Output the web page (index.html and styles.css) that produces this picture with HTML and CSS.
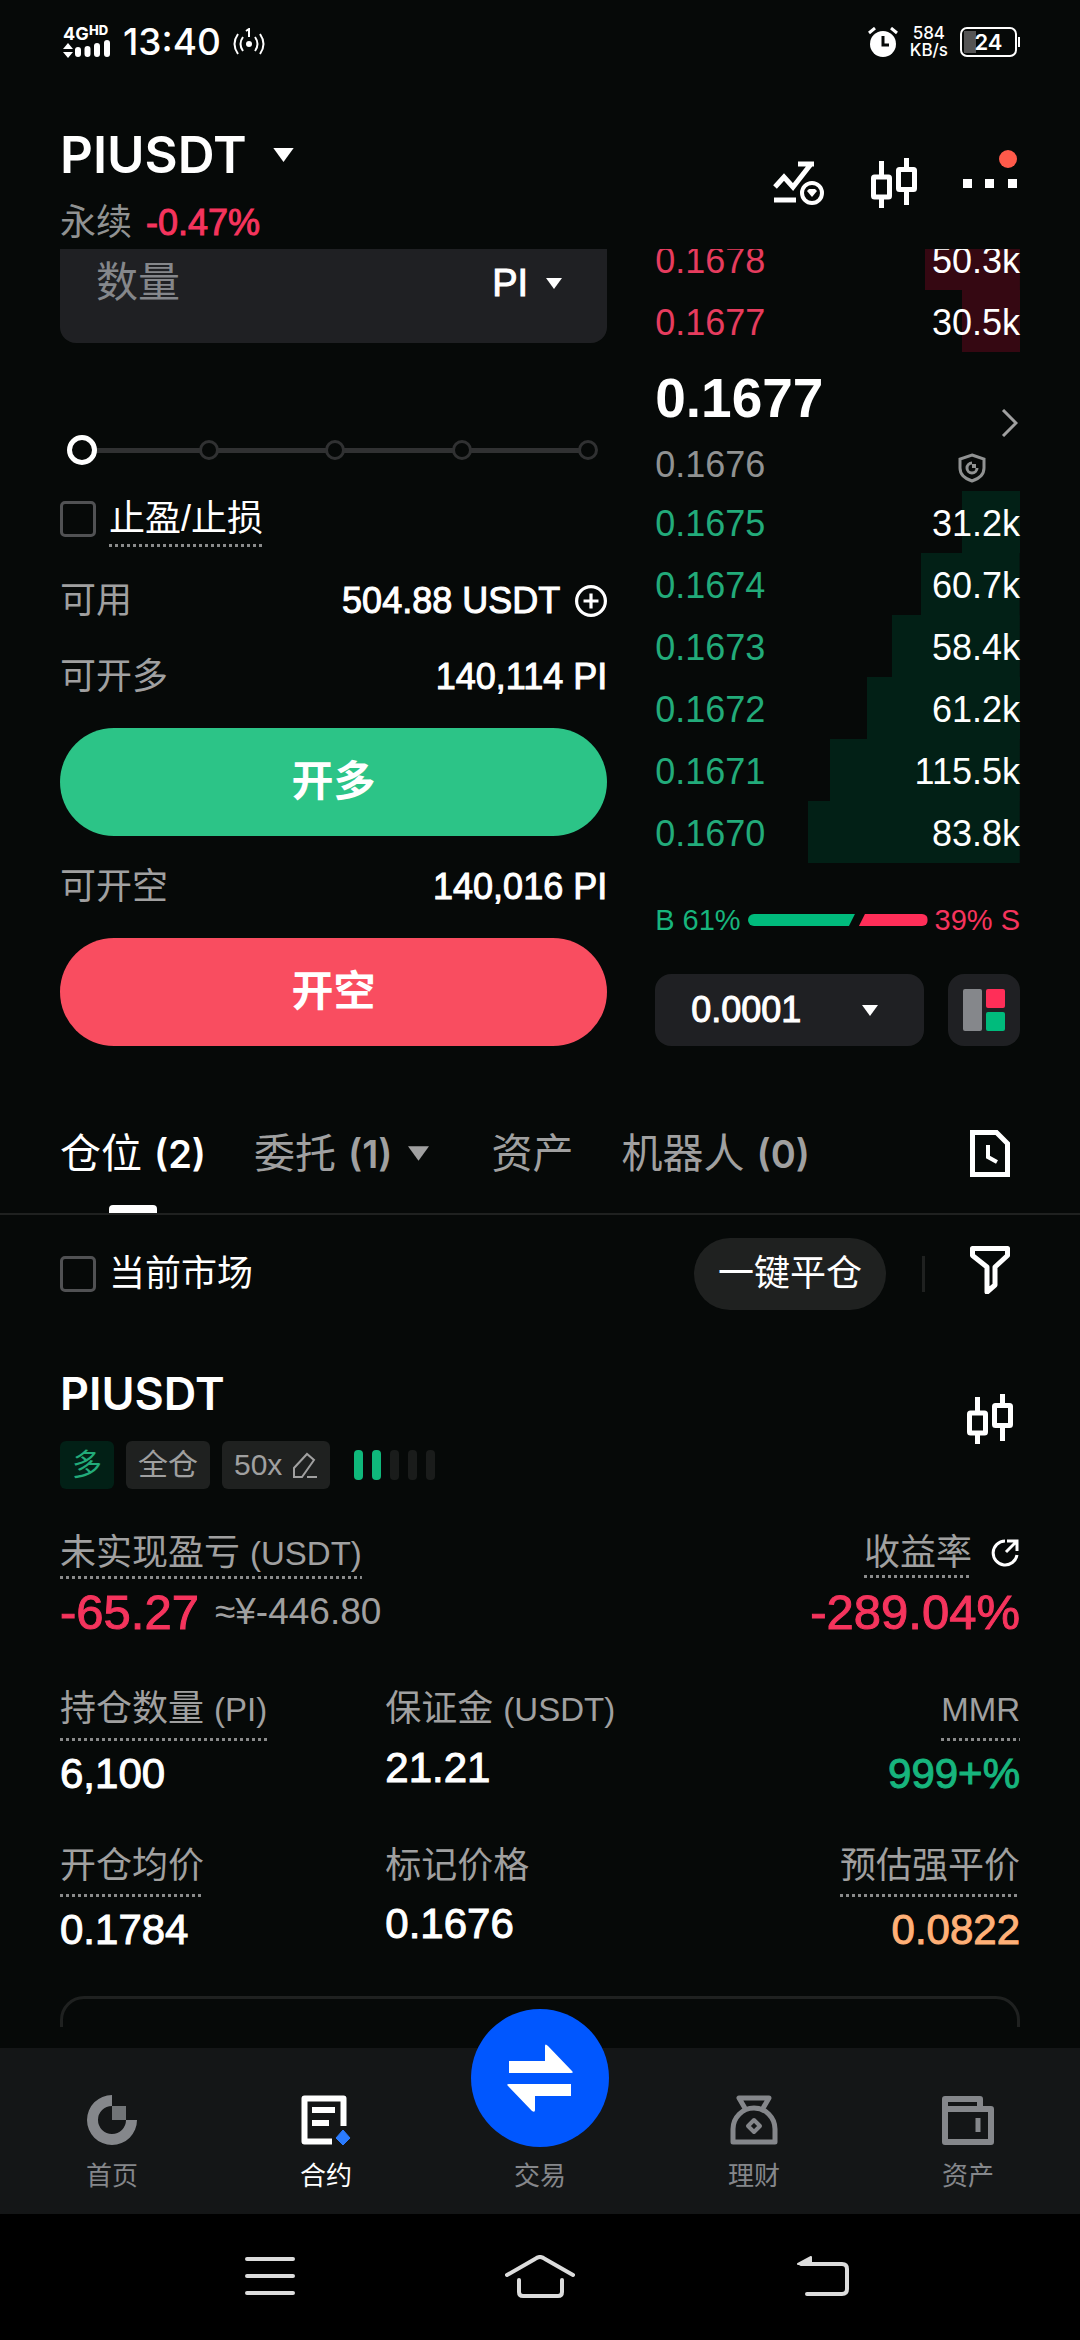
FILE: index.html
```html
<!DOCTYPE html>
<html lang="zh-CN">
<head>
  <meta charset="UTF-8" />
  <meta name="viewport" content="width=device-width, initial-scale=1.0"/>
  <title>PIUSDT 永续</title>
  <link rel="stylesheet" href="styles.css">
</head>
<body>
  <!-- shared icons -->
  <svg class="sprite" aria-hidden="true">
    <symbol id="candles" viewBox="0 0 46 50">
      <path d="M10.500 3v15M10.500 40v10M35.500 0v12M35.500 32v15" fill="none" stroke="currentColor" stroke-width="5"/>
      <rect x="2.500" y="19" width="16" height="20" rx="1" fill="none" stroke="currentColor" stroke-width="5"/>
      <rect x="27.500" y="11.500" width="16" height="20" rx="1" fill="none" stroke="currentColor" stroke-width="5"/>
    </symbol>
    <symbol id="caret" viewBox="0 0 16 11">
      <path d="M0 0h16L8 11z" fill="currentColor"/>
    </symbol>
  </svg>

  <div class="status-bar">
    <div class="status-side">
      <svg class="signal" viewBox="0 0 48 34">
        <text x="0" y="15" font-size="18" font-weight="700" fill="#fff">4G</text>
        <text x="26" y="10" font-size="13" font-weight="800" fill="#fff">HD</text>
        <path d="M0 24l5-6 5 6zM0 27h10l-5 6z" fill="#fff"/>
        <path d="M15 25v4M24.500 24v5M34 21v8M44 18v11" stroke="#fff" stroke-width="6" stroke-linecap="round"/>
      </svg>
      <span class="clock">13:40</span>
      <svg class="hotspot" viewBox="0 0 32 28">
        <circle cx="16" cy="16" r="3" fill="#fff"/>
        <path d="M16 9V1l-3 2M5 6q-7 10 0 20M10 9q-5 7 0 14M27 6q7 10 0 20M22 9q5 7 0 14" fill="none" stroke="#fff" stroke-width="2"/>
      </svg>
    </div>
    <div class="status-side">
      <svg class="alarm" viewBox="0 0 30 30">
        <circle cx="15" cy="17" r="13" fill="#fff"/>
        <path d="M1 6l6-5M29 6l-6-5" stroke="#fff" stroke-width="3"/>
        <path d="M15 9v9h6" fill="none" stroke="#060908" stroke-width="3"/>
      </svg>
      <div class="speed"><span>584</span><span>KB/s</span></div>
      <div class="battery">24</div>
    </div>
  </div>

  <header class="header">
    <div>
      <h1 class="pair">PIUSDT <svg class="pair-caret"><use href="#caret"/></svg></h1>
      <p class="pair-info">永续 <span class="down medium">-0.47%</span></p>
    </div>
    <div class="header-icons">
      <button class="icon-btn" aria-label="交易设置">
        <svg width="52" height="44" viewBox="0 0 52 44">
          <path d="M2 26l9-10 9 10L38 3M25 3h16" fill="none" stroke="currentColor" stroke-width="5"/>
          <path d="M1 39h22" stroke="currentColor" stroke-width="5"/>
          <circle cx="39" cy="32" r="10" fill="none" stroke="currentColor" stroke-width="4"/>
          <path d="M34 30l2-2h6l2 2-5 6z" fill="currentColor"/>
        </svg>
      </button>
      <button class="icon-btn" aria-label="K线"><svg width="46" height="50"><use href="#candles"/></svg></button>
      <button class="icon-btn more" aria-label="更多">
        <svg width="54" height="9" viewBox="0 0 54 9"><path d="M0 0h9v9H0zM22 0h9v9h-9zM45 0h9v9h-9z" fill="currentColor"/></svg>
      </button>
    </div>
  </header>

  <main class="content">
    <section class="trade">
      <form class="order-form">
        <div class="amount-box">
          <input class="amount" type="text" placeholder="数量" aria-label="数量">
          <div class="unit medium">
            <select aria-label="单位"><option>PI</option></select>
            <svg class="caret"><use href="#caret"/></svg>
          </div>
        </div>

        <div class="slider">
          <div class="slider-marks"><i></i><i></i><i></i><i></i><i></i></div>
          <input type="range" min="0" max="100" value="0" aria-label="仓位比例">
        </div>

        <div class="check tpsl">
          <input type="checkbox" id="tpsl">
          <label for="tpsl" class="hint">止盈/止损</label>
        </div>

        <div class="row">
          <span>可用</span>
          <strong class="medium">504.88 USDT
            <svg class="plus" viewBox="0 0 30 30"><circle cx="15" cy="15" r="13.500"/><path d="M15 8v14M8 15h14"/></svg>
          </strong>
        </div>
        <div class="row"><span>可开多</span><strong class="medium">140,114 PI</strong></div>
        <button type="button" class="order-btn long">开多</button>
        <div class="row"><span>可开空</span><strong class="medium">140,016 PI</strong></div>
        <button type="button" class="order-btn short">开空</button>
      </form>

      <div class="book">
        <table class="depth asks">
          <tr style="--depth: 26%"><td>0.1678</td><td>50.3k</td></tr>
          <tr style="--depth: 16%"><td>0.1677</td><td>30.5k</td></tr>
        </table>
        <div class="last">
          <div>
            <div class="last-price">0.1677</div>
            <div class="mark-price">0.1676</div>
          </div>
          <div class="last-icons">
            <svg width="17" height="28" viewBox="0 0 17 28"><path d="M2 1l13 13L2 27" fill="none" stroke="#a0a0a0" stroke-width="3"/></svg>
            <svg class="shield" width="28" height="30" viewBox="0 0 28 30">
              <path d="M14 2l12 4v9q0 9-12 13Q2 24 2 15V6z" fill="none" stroke="#909292" stroke-width="3"/>
              <path d="M14 10a5 5 0 1 0 5 5" fill="none" stroke="#909292" stroke-width="3"/>
              <path d="M14 11h4v4h-4z" fill="#909292"/>
            </svg>
          </div>
        </div>
        <table class="depth bids">
          <tr style="--depth: 16%"><td>0.1675</td><td>31.2k</td></tr>
          <tr style="--depth: 27%"><td>0.1674</td><td>60.7k</td></tr>
          <tr style="--depth: 35%"><td>0.1673</td><td>58.4k</td></tr>
          <tr style="--depth: 42%"><td>0.1672</td><td>61.2k</td></tr>
          <tr style="--depth: 52%"><td>0.1671</td><td>115.5k</td></tr>
          <tr style="--depth: 58%"><td>0.1670</td><td>83.8k</td></tr>
        </table>
        <div class="ratio">
          <span class="up">B 61%</span>
          <div class="ratio-bar"><i class="buy" style="flex-grow: 61"></i><i class="sell" style="flex-grow: 39"></i></div>
          <span class="down">39% S</span>
        </div>
        <div class="book-tools">
          <div class="precision medium">
            <select aria-label="深度精度"><option>0.0001</option></select>
            <svg class="caret"><use href="#caret"/></svg>
          </div>
          <button class="layout-btn" aria-label="盘口样式">
            <svg width="42" height="42" viewBox="0 0 42 42">
              <rect width="19" height="42" rx="2" fill="#85878b"/>
              <rect x="23" width="19" height="19" rx="2" fill="#ff2e58"/>
              <rect x="23" y="23" width="19" height="19" rx="2" fill="#00bb7c"/>
            </svg>
          </button>
        </div>
      </div>
    </section>

    <nav class="tabs">
      <button class="tab active">仓位 <b>(2)</b></button>
      <button class="tab">委托 <b>(1)</b> <svg class="tab-caret"><use href="#caret"/></svg></button>
      <button class="tab">资产</button>
      <button class="tab">机器人 <b>(0)</b></button>
      <button class="icon-btn history" aria-label="历史">
        <svg width="40" height="48" viewBox="0 0 40 48">
          <path d="M2.500 2.500h24l11 11v31h-35z" fill="none" stroke="currentColor" stroke-width="5"/>
          <path d="M18 15v12l9 5" fill="none" stroke="currentColor" stroke-width="4"/>
        </svg>
      </button>
    </nav>

    <div class="filters">
      <div class="check">
        <input type="checkbox" id="current-market">
        <label for="current-market">当前市场</label>
      </div>
      <button class="close-all">一键平仓</button>
      <span class="divider"></span>
      <button class="icon-btn funnel" aria-label="筛选">
        <svg width="40" height="48" viewBox="0 0 40 48">
          <path d="M2.500 2.500h35v7L25 21v18l-8 7V21L2.500 9.500z" fill="none" stroke="currentColor" stroke-width="5" stroke-linejoin="round"/>
        </svg>
      </button>
    </div>

    <article class="position">
      <div class="position-head">
        <div>
          <h2>PIUSDT</h2>
          <div class="tags">
            <span class="tag tag-long">多</span>
            <span class="tag">全仓</span>
            <span class="tag">50x
              <svg width="26" height="28" viewBox="0 0 26 28"><path d="M2 26v-9L15 3l7 6L10 26zM15 26h10" fill="none" stroke="currentColor" stroke-width="2"/></svg>
            </span>
            <span class="adl"><i class="on"></i><i class="on"></i><i></i><i></i><i></i></span>
          </div>
        </div>
        <button class="icon-btn" aria-label="K线"><svg width="46" height="50"><use href="#candles"/></svg></button>
      </div>

      <div class="pnl">
        <div>
          <div class="label"><span class="hint">未实现盈亏 <span class="latin">(USDT)</span></span></div>
          <div class="pnl-value"><span class="down medium">-65.27</span><small>≈¥-446.80</small></div>
        </div>
        <div class="right">
          <div class="label"><span class="hint">收益率</span>
            <svg class="share" width="30" height="30" viewBox="0 0 30 30">
              <path d="M15 3a12 12 0 1 0 12 14M16 14L27 3M17 3h10v10" fill="none" stroke="#fff" stroke-width="3"/>
            </svg>
          </div>
          <div class="pnl-value down medium">-289.04%</div>
        </div>
      </div>

      <dl class="stats">
        <div><dt><span class="hint low">持仓数量 <span class="latin">(PI)</span></span></dt><dd>6,100</dd></div>
        <div><dt>保证金 <span class="latin">(USDT)</span></dt><dd>21.21</dd></div>
        <div class="right"><dt><span class="hint low"><span class="latin">MMR</span></span></dt><dd class="up">999+%</dd></div>
        <div><dt><span class="hint low">开仓均价</span></dt><dd>0.1784</dd></div>
        <div><dt>标记价格</dt><dd>0.1676</dd></div>
        <div class="right"><dt><span class="hint low">预估强平价</span></dt><dd class="warn">0.0822</dd></div>
      </dl>

      <div class="next-box"></div>
    </article>
  </main>

  <nav class="bottom-nav">
    <a href="#home">
      <svg width="50" height="50" viewBox="0 0 50 50"><path d="M25 0a25 25 0 1 0 25 25H39a14 14 0 1 1-14-14z" fill="currentColor"/><path d="M25 11h14v14H25z" fill="#717477"/></svg>
      首页
    </a>
    <a href="#futures" class="active">
      <svg width="50" height="50" viewBox="0 0 50 50">
        <path d="M42.500 31V3.500h-39v43H31" fill="none" stroke="currentColor" stroke-width="6" stroke-linejoin="round"/>
        <path d="M11 15h23M11 28h17" stroke="currentColor" stroke-width="6"/>
        <path d="M42 35l7 8-7 7-7-7z" fill="#2b7cff" stroke="#2b7cff" stroke-linejoin="round"/>
      </svg>
      合约
    </a>
    <a href="#trade">
      <span class="swap">
        <svg width="66" height="68" viewBox="0 0 66 68"><path d="M2 17h36V2q0-3 3 0l24 25q2 2-1 2H2zM64 40H2q-3 0-1 2l24 25q3 2 3-1V52h36z" fill="#fff"/></svg>
      </span>
      交易
    </a>
    <a href="#earn">
      <svg width="50" height="50" viewBox="0 0 50 50">
        <path d="M17 15L10 3h30l-7 12M4 47V34a21 21 0 0 1 42 0v13z" fill="none" stroke="currentColor" stroke-width="5" stroke-linejoin="round"/>
        <path d="M25 25l6 6-6 6-6-6z" fill="none" stroke="currentColor" stroke-width="4" stroke-linejoin="round"/>
      </svg>
      理财
    </a>
    <a href="#assets">
      <svg width="52" height="50" viewBox="0 0 52 50">
        <path d="M3 14V4h35v10M3 14h46v33H3z" fill="none" stroke="currentColor" stroke-width="6" stroke-linejoin="round"/>
        <path d="M36 23v14" stroke="currentColor" stroke-width="5"/>
      </svg>
      资产
    </a>
  </nav>

  <div class="system-nav">
    <button class="icon-btn" aria-label="菜单"><svg width="50" height="44" viewBox="0 0 50 44"><path d="M2 4h46M2 21h46M2 38h46"/></svg></button>
    <button class="icon-btn" aria-label="主页"><svg width="70" height="44" viewBox="0 0 70 44"><path d="M2 20L30 4q5-4 10 0l28 16M14 25v12q0 4 4 4h35q4 0 4-4V25"/></svg></button>
    <button class="icon-btn back" aria-label="返回"><svg width="52" height="44" viewBox="0 0 52 44"><path d="M4 9h41q5 0 5 5v20q0 5-5 5H10"/><path d="M1 9L14 2v7z"/></svg></button>
  </div>
</body>
</html>
```

FILE: styles.css
```css
* {
  margin: 0;
  padding: 0;
  box-sizing: border-box;
}

body {
  display: flex;
  flex-direction: column;
  height: 100vh;
  background: #060908;
  color: #fff;
  font-family: "Liberation Sans", "Noto Sans CJK SC", sans-serif;
  font-size: 36px;
  line-height: 50px;
  overflow: hidden;
}

button, input, select {
  font: inherit;
  color: inherit;
  background: none;
  border: none;
  appearance: none;
  outline: none;
}

button { cursor: pointer; }
svg { display: block; flex: none; }
.sprite { position: absolute; width: 0; height: 0; }
.icon-btn { display: flex; }

.up { color: #17b57d; }
.down { color: #f5345d; }
.warn { color: #ffb077; }

/* a weight between regular and bold */
.medium,
.stats dd {
  font-weight: 400;
  -webkit-text-stroke: 1px currentColor;
}

/* status bar */
.status-bar {
  display: flex;
  justify-content: space-between;
  padding: 0 60px;
  height: 84px;
  font-family: Inter, sans-serif;
}

.status-side {
  display: flex;
  align-items: center;
  gap: 12px;
}

.signal { width: 48px; height: 34px; margin-left: 3px; overflow: visible; }
.clock { font-size: 37px; font-weight: 500; }
.hotspot { width: 32px; height: 28px; }
.alarm { width: 30px; height: 30px; }

.speed {
  display: flex;
  flex-direction: column;
  font-size: 17px;
  font-weight: 500;
  line-height: 17px;
  text-align: center;
}

.battery {
  position: relative;
  width: 57px;
  height: 30px;
  margin-right: 3px;
  border: 2px solid #fff;
  border-radius: 7px;
  background: linear-gradient(#555, #555) 2px 2px / 12px 22px no-repeat;
  font-size: 22px;
  font-weight: 600;
  line-height: 26px;
  text-align: center;
}

.battery::after {
  content: "";
  position: absolute;
  right: -5px;
  top: 8px;
  width: 2px;
  height: 10px;
  background: #fff;
}

/* header */
.header {
  display: flex;
  justify-content: space-between;
  padding: 36px 60px 0;
  height: 165px;
}

.pair {
  display: flex;
  align-items: center;
  gap: 26px;
  font-family: Inter, sans-serif;
  font-size: 51px;
  font-weight: 600;
  line-height: 70px;
}

.pair-caret { width: 21px; height: 14px; }

.pair-info {
  display: flex;
  gap: 14px;
  color: #909292;
  line-height: 66px;
}

.header-icons {
  display: flex;
  align-items: center;
  gap: 46px;
  height: 126px;
  padding-right: 3px;
}

.more { position: relative; }

.more::after {
  content: "";
  position: absolute;
  right: 0;
  bottom: 20px;
  width: 18px;
  height: 18px;
  border-radius: 50%;
  background: #ff5a4a;
}

/* scrolled content */
.content {
  flex: 1;
  min-height: 0;
  margin-bottom: 21px;
  overflow: hidden;
}

.trade {
  display: flex;
  gap: 48px;
  padding: 0 60px;
}

.order-form {
  flex: 3;
  min-width: 0;
  display: flex;
  flex-direction: column;
  gap: 26px;
  margin-top: -26px;
}

.book {
  flex: 2;
  min-width: 0;
  margin-top: -21px;
}

.amount-box {
  display: flex;
  align-items: center;
  height: 120px;
  padding: 0 45px 0 36px;
  border-radius: 16px;
  background: #1f2023;
}

.amount { flex: 1; min-width: 0; font-size: 42px; }
.amount::placeholder { color: #85878b; }

.unit {
  display: flex;
  align-items: center;
  gap: 18px;
  font-size: 38px;
}

.caret { width: 16px; height: 11px; }

.slider {
  position: relative;
  height: 30px;
  margin: 66px 7px 0;
}

.slider-marks {
  display: flex;
  justify-content: space-between;
  align-items: center;
  height: 30px;
  padding: 0 2px 0 5px;
  background: linear-gradient(#303132, #303132) center / calc(100% - 24px) 5px no-repeat;
}

.slider-marks i {
  width: 20px;
  height: 20px;
  border: 3px solid #303132;
  border-radius: 50%;
  background: #060908;
}

.slider input {
  position: absolute;
  inset: 0;
  width: 100%;
}

.slider input::-webkit-slider-thumb {
  appearance: none;
  width: 30px;
  height: 30px;
  border: 5px solid #fff;
  border-radius: 50%;
  background: #060908;
}

.check {
  display: flex;
  align-items: center;
  gap: 13px;
}

.check input {
  width: 36px;
  height: 36px;
  border: 3px solid #505153;
  border-radius: 5px;
}

.tpsl { margin-bottom: 3px; }
.tpsl label { line-height: 56px; }

.hint {
  background: repeating-linear-gradient(90deg, #8a8b8b 0 3px, transparent 3px 6px) bottom / 100% 3px no-repeat;
}

.latin { font-size: 33px; }

.row {
  display: flex;
  justify-content: space-between;
  color: #a0a0a0;
}

.row strong {
  display: flex;
  align-items: center;
  gap: 15px;
  color: #fff;
}

.plus {
  width: 32px;
  height: 32px;
  fill: none;
  stroke: #fff;
  stroke-width: 3;
}

.order-btn {
  height: 108px;
  border-radius: 54px;
  font-size: 42px;
  font-weight: 700;
}

.long { background: #2cc487; }
.short { background: #f94d60; }

/* order book */
.depth,
.depth tbody { display: block; }

.depth tr {
  display: flex;
  justify-content: space-between;
  height: 62px;
  line-height: 66px;
  background: linear-gradient(var(--fill), var(--fill)) right / var(--depth) 100% no-repeat;
}

.asks { --fill: #350812; }
.bids { --fill: #022016; }
.asks td:first-child { color: #e63c5e; }
.bids td:first-child { color: #22ab7a; }

.last {
  display: flex;
  justify-content: space-between;
  height: 139px;
}

.last-price {
  padding-top: 10px;
  font-size: 55px;
  font-weight: 700;
  line-height: 72px;
}

.mark-price { color: #909292; line-height: 62px; }

.last-icons {
  display: flex;
  flex-direction: column;
  align-items: flex-end;
  gap: 16px;
  padding: 57px 2px 0 0;
}

.shield { margin-right: 32px; }

.ratio {
  display: flex;
  align-items: center;
  gap: 7px;
  height: 36px;
  margin: 39px 0 36px;
  font-size: 29px;
}

.ratio-bar {
  flex: 1;
  display: flex;
  gap: 4px;
  height: 12px;
}

.ratio-bar i { flex-basis: 0; }

.buy {
  background: #00bb7c;
  border-radius: 6px 0 0 6px;
  clip-path: polygon(0 0, 100% 0, calc(100% - 6px) 100%, 0 100%);
}

.sell {
  background: #ff2e58;
  border-radius: 0 6px 6px 0;
  clip-path: polygon(6px 0, 100% 0, 100% 100%, 0 100%);
}

.book-tools {
  display: flex;
  gap: 24px;
}

.precision {
  flex: 1;
  display: flex;
  align-items: center;
  justify-content: space-between;
  height: 72px;
  padding: 0 46px 0 36px;
  border-radius: 16px;
  background: #1f2023;
}

.layout-btn {
  display: flex;
  align-items: center;
  justify-content: center;
  width: 72px;
  border-radius: 16px;
  background: #1f2023;
}

/* tabs */
.tabs {
  display: flex;
  align-items: center;
  gap: 48px;
  height: 121px;
  margin-top: 48px;
  padding: 0 70px 0 60px;
  border-bottom: 2px solid #1f2120;
}

.tab {
  position: relative;
  display: flex;
  align-items: center;
  gap: 12px;
  height: 100%;
  color: #a0a0a0;
  font-size: 41px;
}

.tab b { font-family: Inter, sans-serif; font-size: 38px; font-weight: 600; }
.tab-caret { width: 21px; height: 15px; margin: 0 14px 0 4px; }
.tab.active { color: #fff; }

.tab.active::after {
  content: "";
  position: absolute;
  left: 50%;
  bottom: 0;
  width: 48px;
  height: 8px;
  margin-left: -24px;
  border-radius: 4px 4px 0 0;
  background: #fff;
}

.history { margin-left: auto; }

.filters {
  display: flex;
  align-items: center;
  gap: 36px;
  padding: 23px 70px 0 60px;
}

.close-all {
  height: 72px;
  margin-left: auto;
  padding: 0 24px;
  border-radius: 36px;
  background: #1f2120;
}

.divider {
  width: 3px;
  height: 36px;
  margin-right: 9px;
  background: #1f2120;
}

.funnel { padding-bottom: 8px; }

/* position card */
.position { padding: 54px 60px 0; }

.position-head {
  display: flex;
  justify-content: space-between;
  align-items: center;
  padding-right: 7px;
}

.position-head .icon-btn { padding-bottom: 16px; }

.position h2 {
  font-family: Inter, sans-serif;
  font-size: 45px;
  font-weight: 600;
  line-height: 60px;
}

.tags {
  display: flex;
  align-items: center;
  gap: 12px;
  margin-top: 17px;
}

.tag {
  display: flex;
  align-items: center;
  gap: 10px;
  height: 48px;
  padding: 0 12px;
  border-radius: 6px;
  background: #1f2120;
  color: #a0a0a0;
  font-size: 30px;
}

.tag-long { background: #022016; color: #22ab7a; }

.adl {
  display: flex;
  gap: 9px;
  margin-left: 12px;
}

.adl i {
  width: 9px;
  height: 30px;
  border-radius: 4px;
  background: #1a1c1b;
}

.adl .on { background: #0fb87b; }

.pnl {
  display: flex;
  justify-content: space-between;
  margin-top: 38px;
}

.right { text-align: right; }

.label {
  display: flex;
  align-items: center;
  gap: 18px;
  height: 52px;
  color: #a0a0a0;
}

.right .label { justify-content: flex-end; }

.pnl-value {
  display: flex;
  align-items: center;
  gap: 16px;
  font-size: 49px;
  line-height: 66px;
}

.pnl-value small { color: #a0a0a0; font-size: 37px; }

.stats {
  display: grid;
  grid-template-columns: repeat(3, 1fr);
  gap: 34px 16px;
  margin-top: 39px;
}

.stats dt { color: #a0a0a0; }
.stats dd { font-size: 42px; line-height: 66px; }

.low {
  display: inline-block;
  padding-bottom: 6px;
}

.next-box {
  height: 160px;
  margin-top: 33px;
  border: 3px solid #1f2120;
  border-radius: 24px;
}

/* app navigation */
.bottom-nav {
  display: flex;
  height: 166px;
  padding: 0 5px;
  background: #141617;
}

.bottom-nav a {
  flex: 1;
  display: flex;
  flex-direction: column;
  align-items: center;
  justify-content: flex-end;
  gap: 9px;
  padding-bottom: 16px;
  position: relative;
  color: #85878b;
  font-size: 26px;
  line-height: 44px;
  text-decoration: none;
}

.bottom-nav .active { color: #fff; }

.swap {
  position: absolute;
  top: -39px;
  display: flex;
  align-items: center;
  justify-content: center;
  width: 138px;
  height: 138px;
  border-radius: 50%;
  background: #0057ff;
}

.system-nav {
  display: grid;
  grid-template-columns: repeat(3, 1fr);
  height: 126px;
  padding: 0 135px;
  background: #000;
}

.system-nav button {
  align-items: center;
  justify-content: center;
}

.system-nav svg {
  fill: none;
  stroke: #dcdcdc;
  stroke-width: 4;
  stroke-linecap: round;
  stroke-linejoin: round;
}

.system-nav .back { padding-left: 26px; }
.back path:last-child { fill: #dcdcdc; stroke-width: 2; }
```
